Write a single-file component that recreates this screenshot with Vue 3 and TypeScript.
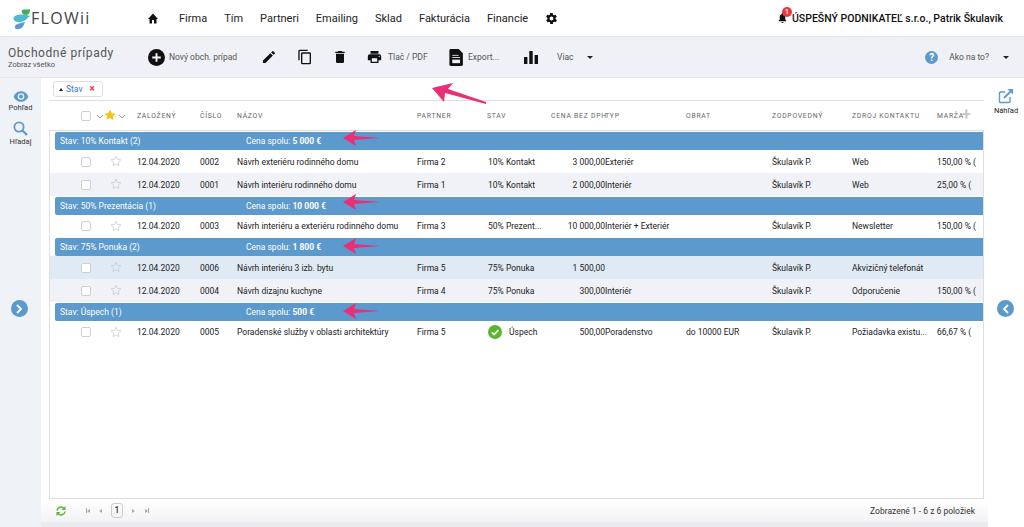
<script setup lang="ts">
interface Row { kind: 'r'; date: string; num: string; name: string; partner: string; stav: string; price: string; typ: string; obrat: string; owner: string; src: string; marza: string; cls?: string; ok?: boolean }
interface Group { kind: 'g'; label: string; sum: string; total: string }
const cols = ['Založený', 'Číslo', 'Názov', 'Partner', 'Stav', 'Cena bez DPH', 'Typ', 'Obrat', 'Zodpovedný', 'Zdroj kontaktu', 'Marža']
const items: (Row | Group)[] = [
  { kind: 'g', label: 'Stav: 10% Kontakt (2)', sum: 'Cena spolu:', total: '5 000 €' },
  { kind: 'r', date: '12.04.2020', num: '0002', name: 'Návrh exteriéru rodinného domu', partner: 'Firma 2', stav: '10% Kontakt', price: '3 000,00', typ: 'Exteriér', obrat: '', owner: 'Škulavík P.', src: 'Web', marza: '150,00 % (' },
  { kind: 'r', date: '12.04.2020', num: '0001', name: 'Návrh interiéru rodinného domu', partner: 'Firma 1', stav: '10% Kontakt', price: '2 000,00', typ: 'Interiér', obrat: '', owner: 'Škulavík P.', src: 'Web', marza: '25,00 % (', cls: 'alt' },
  { kind: 'g', label: 'Stav: 50% Prezentácia (1)', sum: 'Cena spolu:', total: '10 000 €' },
  { kind: 'r', date: '12.04.2020', num: '0003', name: 'Návrh interiéru a exteriéru rodinného domu', partner: 'Firma 3', stav: '50% Prezent...', price: '10 000,00', typ: 'Interiér + Exteriér', obrat: '', owner: 'Škulavík P.', src: 'Newsletter', marza: '150,00 % (' },
  { kind: 'g', label: 'Stav: 75% Ponuka (2)', sum: 'Cena spolu:', total: '1 800 €' },
  { kind: 'r', date: '12.04.2020', num: '0006', name: 'Návrh interiéru 3 izb. bytu', partner: 'Firma 5', stav: '75% Ponuka', price: '1 500,00', typ: '', obrat: '', owner: 'Škulavík P.', src: 'Akvizičný telefonát', marza: '', cls: 'hl' },
  { kind: 'r', date: '12.04.2020', num: '0004', name: 'Návrh dizajnu kuchyne', partner: 'Firma 4', stav: '75% Ponuka', price: '300,00', typ: 'Interiér', obrat: '', owner: 'Škulavík P.', src: 'Odporučenie', marza: '150,00 % (', cls: 'alt' },
  { kind: 'g', label: 'Stav: Úspech (1)', sum: 'Cena spolu:', total: '500 €' },
  { kind: 'r', date: '12.04.2020', num: '0005', name: 'Poradenské služby v oblasti architektúry', partner: 'Firma 5', stav: 'Úspech', price: '500,00', typ: 'Poradenstvo', obrat: 'do 10000 EUR', owner: 'Škulavík P.', src: 'Požiadavka existu...', marza: '66,67 % (', ok: true },
]
const nav = ['Firma', 'Tím', 'Partneri', 'Emailing', 'Sklad', 'Fakturácia', 'Financie']
const arrowTops = [138, 202, 246, 311]
</script>

<template>
  <div class="page">
    <header class="top">
      <div class="logo">
        <svg width="27" height="28" viewBox="0 0 27 28">
          <path d="M8 13c3-3 9-3 16-1-4 3-4 5-9 6-5 1-9-2-7-5z" fill="#4fb9d2" />
          <path d="M16 6c2-1 6 0 8-1 0 3-1 6-4 6-3 0-5-3-4-5z" fill="#3fae5a" />
          <path d="M9 22c1-2 5-3 10-4-1 3-2 6-6 7-3 1-5-1-4-3z" fill="#5c99cc" />
        </svg>
        <span class="word">FLOWii</span>
      </div>
      <nav class="nav">
        <svg class="home" width="12" height="11" viewBox="0 0 24 22"><path d="M10 21v-7h4v7h5v-9h3L12 1 2 12h3v9z" fill="#111" /></svg>
        <a v-for="n in nav" :key="n">{{ n }}</a>
        <svg width="13" height="13" viewBox="0 0 24 24"><path fill="#111" d="M19.4 13c0-.3.1-.6.1-1s0-.7-.1-1l2.1-1.6c.2-.2.2-.4.1-.6l-2-3.5c-.1-.2-.4-.3-.6-.2l-2.5 1c-.5-.4-1.1-.7-1.7-1l-.4-2.600c0-.3-.2-.5-.5-.5h-4c-.3 0-.5.2-.5.4l-.4 2.700c-.6.200-1.200.6-1.700 1l-2.500-1c-.2-.1-.5 0-.6.2l-2 3.500c-.1.2-.1.5.1.600L4.600 11c0 .3-.1.7-.1 1s0 .7.1 1l-2.100 1.600c-.2.2-.2.4-.1.600l2 3.500c.1.2.4.3.6.200l2.500-1c.5.4 1.100.7 1.700 1l.4 2.600c0 .3.2.5.5.5h4c.3 0 .5-.2.5-.4l.4-2.700c.6-.2 1.200-.6 1.700-1l2.500 1c.2.1.5 0 .6-.2l2-3.500c.1-.2.1-.5-.1-.6zM12 15.500a3.500 3.500 0 1 1 0-7 3.500 3.500 0 0 1 0 7z" /></svg>
      </nav>
      <div class="user">
        <span class="bell">
          <svg width="11" height="12" viewBox="0 0 24 24"><path fill="#111" d="M12 23a2.500 2.500 0 0 0 2.500-2.500h-5A2.500 2.500 0 0 0 12 23zm8-6-2-2v-5c0-3.200-1.700-5.800-4.500-6.500V2.500a1.500 1.500 0 0 0-3 0v1C7.700 4.200 6 6.800 6 10v5l-2 2v2h16z" /></svg>
          <b>1</b>
        </span>
        <strong>ÚSPEŠNÝ PODNIKATEĽ s.r.o., Patrik Škulavík</strong>
      </div>
    </header>

    <section class="toolbar">
      <div class="title">
        <div class="t1">Obchodné prípady</div>
        <div class="t2">Zobraz všetko</div>
      </div>
      <div class="tool t-new">
        <svg width="17" height="17" viewBox="0 0 24 24"><circle cx="12" cy="12" r="12" fill="#111" /><path d="M12 6v12M6 12h12" stroke="#fff" stroke-width="2.600" /></svg>
        <span>Nový obch. prípad</span>
      </div>
      <svg class="ic" width="16" height="16" viewBox="0 0 24 24"><path fill="#111" d="M3 17.200V21h3.800L17.800 9.900l-3.700-3.700zM20.700 7c.4-.4.400-1 0-1.400l-2.300-2.300c-.4-.4-1-.4-1.400 0l-1.800 1.800 3.700 3.700z" /></svg>
      <svg class="ic" width="16" height="16" viewBox="0 0 24 24"><path fill="#111" d="M16 1H4a2 2 0 0 0-2 2v14h2V3h12zm3 4H8a2 2 0 0 0-2 2v14a2 2 0 0 0 2 2h11a2 2 0 0 0 2-2V7a2 2 0 0 0-2-2zm0 16H8V7h11z" /></svg>
      <svg class="ic" width="16" height="16" viewBox="0 0 24 24"><path fill="#111" d="M6 19a2 2 0 0 0 2 2h8a2 2 0 0 0 2-2V7H6zM19 4h-3.500l-1-1h-5l-1 1H5v2h14z" /></svg>
      <div class="tool t-print">
        <svg width="17" height="16" viewBox="0 0 24 24"><path fill="#111" d="M19 8H5a3 3 0 0 0-3 3v6h4v4h12v-4h4v-6a3 3 0 0 0-3-3zm-3 11H8v-5h8zm3-7a1 1 0 1 1 0-2 1 1 0 0 1 0 2zM18 3H6v4h12z" /></svg>
        <span>Tlač / PDF</span>
      </div>
      <div class="tool t-exp">
        <svg width="15" height="17" viewBox="0 0 20 24"><path fill="#111" d="M2 0h11l6 6v16a2 2 0 0 1-2 2H2a2 2 0 0 1-2-2V2a2 2 0 0 1 2-2z" /><path d="M4 9h9M4 12h11" stroke="#eff1f6" stroke-width="1.200" /><rect x="4" y="15" width="11" height="5" fill="#eff1f6" /></svg>
        <span>Export...</span>
      </div>
      <svg class="ic t-bar" width="14" height="13" viewBox="0 0 14 13"><path fill="#111" d="M0 6h3.400v7H0zM5.300 0h3.400v13H5.300zM10.600 4H14v9h-3.400z" /></svg>
      <div class="tool t-more"><span>Viac</span><i class="caret"></i></div>
      <div class="help">
        <span class="q">?</span>
        <span>Ako na to?</span>
        <i class="caret"></i>
      </div>
    </section>

    <section class="body">
      <aside class="left">
        <div class="side-item">
          <svg width="16" height="11" viewBox="0 0 24 16"><path fill="#5c99cc" d="M12 0C7 0 2.700 3.300 1 8c1.700 4.700 6 8 11 8s9.300-3.300 11-8c-1.700-4.700-6-8-11-8zm0 13a5 5 0 1 1 0-10 5 5 0 0 1 0 10zm0-8a3 3 0 1 0 0 6 3 3 0 0 0 0-6z" /></svg>
          <span>Pohľad</span>
        </div>
        <div class="side-item">
          <svg width="15" height="15" viewBox="0 0 15 15"><circle cx="6" cy="6" r="4.600" fill="none" stroke="#5c99cc" stroke-width="1.800" /><path d="M9.500 9.500 14 14" stroke="#5c99cc" stroke-width="2.200" /></svg>
          <span>Hľadaj</span>
        </div>
        <div class="round r-left"><svg width="8" height="10" viewBox="0 0 8 10"><path d="M2 1l4 4-4 4" fill="none" stroke="#fff" stroke-width="1.800" /></svg></div>
      </aside>

      <main class="main">
        <div class="chips">
          <div class="chip"><i class="up"></i><span>Stav</span><em>×</em></div>
        </div>
        <div class="thead grid">
          <span class="cb-cell"><i class="cb"></i><svg class="chev" width="8" height="5" viewBox="0 0 8 5"><path d="M1 1l3 3 3-3" fill="none" stroke="#999" /></svg></span>
          <span class="star-cell">
            <svg width="12" height="12" viewBox="0 0 24 24"><path fill="#f5c211" d="M12 1l3.400 7.300 7.900 1-5.800 5.500 1.500 7.900L12 17.800l-7 3.900 1.500-7.900L.7 9.300l7.900-1z" /></svg>
            <svg class="chev" width="8" height="5" viewBox="0 0 8 5"><path d="M1 1l3 3 3-3" fill="none" stroke="#999" /></svg>
          </span>
          <span v-for="(c, i) in cols" :key="c" :class="['th', i === 5 ? 'right' : '']">{{ c }}</span>
          <span class="plus">+</span>
        </div>
        <div class="tbody">
          <template v-for="(it, i) in items" :key="i">
            <div v-if="it.kind === 'g'" class="group">
              <span class="g-label">{{ it.label }}</span>
              <span class="g-sum">{{ it.sum }} <b>{{ it.total }}</b></span>
            </div>
            <div v-else :class="['row', 'grid', it.cls]">
              <span class="cb-cell"><i class="cb"></i></span>
              <span class="star-cell s2"><svg width="12" height="12" viewBox="0 0 24 24"><path fill="none" stroke="#c6c9cf" stroke-width="1.500" d="M12 2.500l2.900 6.200 6.800.9-5 4.700 1.300 6.800-6-3.300-6 3.300 1.300-6.800-5-4.700 6.800-.9z" /></svg></span>
              <span>{{ it.date }}</span>
              <span>{{ it.num }}</span>
              <span class="nm">{{ it.name }}</span>
              <span>{{ it.partner }}</span>
              <span class="st">
                <svg v-if="it.ok" width="14" height="14" viewBox="0 0 14 14"><circle cx="7" cy="7" r="7" fill="#5cb531" /><path d="M3.800 7.200l2.300 2.300 4.200-4.500" fill="none" stroke="#fff" stroke-width="1.600" /></svg>
                {{ it.stav }}
              </span>
              <span class="right">{{ it.price }}</span>
              <span>{{ it.typ }}</span>
              <span>{{ it.obrat }}</span>
              <span>{{ it.owner }}</span>
              <span>{{ it.src }}</span>
              <span class="mz">{{ it.marza }}</span>
            </div>
          </template>
        </div>
        <footer class="pager">
          <svg width="12" height="12" viewBox="0 0 24 24"><path fill="none" stroke="#5cb531" stroke-width="3" d="M4 11a8 8 0 0 1 14-4M20 13a8 8 0 0 1-14 4" /><path fill="#5cb531" d="M21 2v8h-8zM3 22v-8h8z" /></svg>
          <span class="pg pg1"><i class="bar"></i><i class="tl"></i></span>
          <span class="pg"><i class="tl"></i></span>
          <span class="pnum">1</span>
          <span class="pg"><i class="tr"></i></span>
          <span class="pg"><i class="tr"></i><i class="bar"></i></span>
          <span class="count">Zobrazené 1 - 6 z 6 položiek</span>
        </footer>
      </main>

      <aside class="right-side">
        <div class="side-item">
          <svg width="16" height="16" viewBox="0 0 16 16"><path d="M12 9v4.500a1 1 0 0 1-1 1H2.500a1 1 0 0 1-1-1V5a1 1 0 0 1 1-1H7" fill="none" stroke="#5c99cc" stroke-width="1.400" /><path d="M6 10l7-7" stroke="#5c99cc" stroke-width="1.800" /><path d="M9.500 1H15v5.500z" fill="#5c99cc" /></svg>
          <span>Náhľad</span>
        </div>
        <div class="round r-right"><svg width="8" height="10" viewBox="0 0 8 10"><path d="M6 1L2 5l4 4" fill="none" stroke="#fff" stroke-width="1.800" /></svg></div>
      </aside>
    </section>

    <svg class="pink big" width="60" height="30" viewBox="0 0 60 30"><path fill="#ea2f78" d="M3 5 24 0l-5 6 38 13 0 2L16 10l-1 9z" /></svg>
    <svg v-for="t in arrowTops" :key="t" class="pink small" :style="{ top: t - 8 + 'px' }" width="37" height="16" viewBox="0 0 37 16"><path fill="#ea2f78" d="M0 8 13 0l-2 6 26 2-26 2 2 6z" /></svg>
  </div>
</template>

<style>
html, body { margin: 0; background: #fff; }
</style>

<style scoped>
.page { position: relative; width: 1024px; height: 527px; overflow: hidden; display: flex; flex-direction: column; font-family: Roboto, "Liberation Sans", sans-serif; color: #222; background: #fff; }
.top { height: 36px; flex: none; display: flex; align-items: center; border-bottom: 1px solid #e3e4e8; box-sizing: content-box; }
.logo { width: 147px; flex: none; display: flex; align-items: center; padding-left: 6px; box-sizing: border-box; }
.word { font-size: 16px; letter-spacing: 1.300px; color: #444; margin-left: -2px; font-family: "Open Sans", sans-serif; }
.nav { display: flex; align-items: center; gap: 17px; font-size: 11px; color: #222; }
.home { margin-right: 3px; }
.user { margin-left: auto; padding-right: 21px; display: flex; align-items: center; gap: 4px; font-size: 10.500px; color: #111; }
.user strong { font-weight: 500; }
.bell { position: relative; display: inline-flex; }
.bell b { position: absolute; left: 5px; top: -5px; width: 10px; height: 10px; border-radius: 50%; background: #e8393f; color: #fff; font-size: 7px; line-height: 10px; text-align: center; font-weight: 500; }
.toolbar { height: 40px; flex: none; background: #eff1f6; border-bottom: 1px solid #e9e6ea; display: flex; align-items: center; position: relative; font-size: 8.500px; color: #555; }
.title { width: 148px; padding-left: 8px; box-sizing: border-box; flex: none; }
.t1 { font-size: 12px; letter-spacing: .55px; color: #555; line-height: 14px; }
.t2 { font-size: 7.500px; line-height: 9px; color: #555; }
.tool { display: flex; align-items: center; gap: 4px; flex: none; }
.t-new { width: 113px; }
.ic { flex: none; }
.toolbar > .ic:nth-of-type(1) { margin-right: 20px; }
.toolbar > .ic { margin-right: 19px; }
.t-print { width: 83px; gap: 5px; margin-left: -1px; }
.t-exp { width: 75px; gap: 4px; }
.t-bar { margin-right: 27px; }
.t-more { gap: 13px; }
.caret { display: inline-block; border: 3px solid transparent; border-top: 3.500px solid #222; border-bottom: 0; }
.help { margin-left: auto; padding-right: 15px; display: flex; align-items: center; }
.q { width: 13px; height: 13px; border-radius: 50%; background: #5c99cc; color: #fff; text-align: center; font-size: 10px; font-weight: 700; line-height: 13px; margin-right: 11px; }
.help .caret { margin-left: 14px; }
.body { flex: 1; min-height: 0; display: flex; }
.left { width: 41px; flex: none; background: #eff2f7; display: flex; flex-direction: column; align-items: center; padding-top: 13px; box-sizing: border-box; position: relative; }
.side-item { display: flex; flex-direction: column; align-items: center; font-size: 7.500px; color: #333; margin-bottom: 9px; gap: 1px; }
.round { position: absolute; top: 222px; width: 17px; height: 17px; border-radius: 50%; background: #5c99cc; display: flex; align-items: center; justify-content: center; }
.r-left { left: 10.500px; }
.r-right { left: 9px; }
.main { width: 947px; flex: none; display: flex; flex-direction: column; min-width: 0; }
.chips { height: 22px; padding-left: 12px; display: flex; align-items: flex-start; padding-top: 3px; box-sizing: border-box; }
.chip { height: 16px; width: 50px; box-sizing: border-box; border: 1px solid #e0e0e0; border-radius: 3px; display: flex; align-items: center; font-size: 8.500px; color: #3a77d6; padding-left: 5px; }
.up { border: 2px solid transparent; border-bottom: 3px solid #222; border-top: 0; margin-right: 3px; }
.chip em { color: #e8393f; font-style: normal; font-weight: 700; font-size: 10px; margin-left: 7px; line-height: 1; }
.grid { display: grid; grid-template-columns: 32px 24px 32px 63px 37px 180px 70px 64px 54px 81px 86px 80px 85px 60px; align-items: center; }
.thead { height: 30px; margin-left: 8px; width: 935px; border-top: 1px solid #dedede; box-sizing: border-box; position: relative; }
.thead .cb-cell { grid-column: 2; }
.cb-cell { grid-column: 2; display: flex; align-items: center; gap: 5px; }
.star-cell { display: flex; align-items: center; gap: 2px; margin-left: -1px; margin-top: -1px; }
.s2 { padding-left: 5px; margin-left: 0; }
.chev { margin-top: 2px; }
.th { font-size: 6.800px; letter-spacing: .75px; text-transform: uppercase; color: #666; white-space: nowrap; }
.right { text-align: right; }
.thead .right { margin-right: 0; white-space: nowrap; }
.thead .th:nth-of-type(n) { overflow: visible; }
.plus { position: absolute; left: 913px; top: 6px; font-size: 16px; line-height: 16px; font-weight: 700; color: #c9c9c9; }
.cb { display: block; width: 8px; height: 8px; border: 1px solid #cfcfcf; border-radius: 2px; background: #fff; flex: none; }
.tbody { margin-left: 8px; width: 935px; height: 369px; box-sizing: border-box; border: 1px solid #dedede; border-width: 1px 1px 1px 1px; overflow: hidden; padding-top: 1px; flex: none; }
.group { position: relative; height: 18px; margin-left: 5px; margin-right: 0; background: #5c99cc; border-radius: 2px 0 0 2px; color: #fff; font-size: 8.500px; line-height: 18px; }
.g-label { position: absolute; left: 5px; }
.g-sum { position: absolute; left: 191px; }
.g-sum b { font-weight: 700; }
.row { height: 23px; font-size: 8.500px; color: #222; white-space: nowrap; margin-left: -1px; }
.row + .group { margin-top: 0.5px; }
.alt { background: #f0f2f7; }
.hl { background: #e0eaf4; }
.st { display: flex; align-items: center; gap: 7px; margin-left: 1px; }
.mz { overflow: hidden; }
.pager { flex: 1; display: flex; align-items: center; padding-left: 14px; padding-right: 13px; font-size: 8.500px; color: #999; background: linear-gradient(#fff, #f3f3f5); border-bottom: 5px solid #e9ebee; box-sizing: border-box; }
.pager > svg { margin-right: 14px; }
.pg { display: inline-flex; align-items: center; width: 13px; justify-content: center; }
.bar { width: 1px; height: 5px; background: #aaa; }
.tl { border: 2.500px solid transparent; border-right: 3px solid #aaa; border-left: 0; }
.tr { border: 2.500px solid transparent; border-left: 3px solid #aaa; border-right: 0; }
.pnum { width: 12px; height: 15px; border: 1px solid #ccc; border-radius: 3px; margin: 0 4px; box-sizing: border-box; text-align: center; line-height: 13px; color: #333; font-size: 8.500px; font-weight: 500; }
.count { margin-left: auto; color: #333; }
.right-side { flex: 1; display: flex; flex-direction: column; align-items: center; padding-top: 10px; position: relative; box-sizing: border-box; }
.right-side .side-item { gap: 2px; color: #222; font-size: 7.500px; }
.pink { position: absolute; }
.big { left: 429px; top: 83px; }
.small { left: 343px; }
</style>
